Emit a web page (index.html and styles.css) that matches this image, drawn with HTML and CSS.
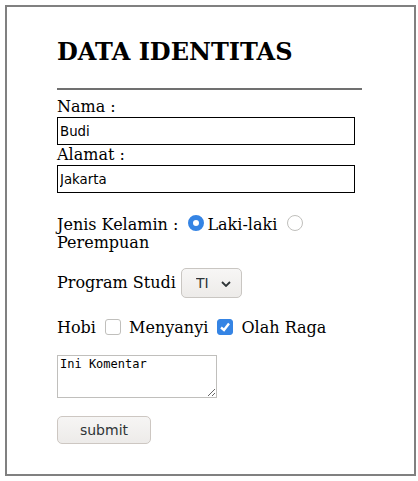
FILE: index.html
```html
<!DOCTYPE html>
<html>
<head>
<meta charset="utf-8">
<link rel="stylesheet" href="styles.css">
</head>
<body>
<div class="box">
  <h2 class="title">DATA IDENTITAS</h2>
  <hr class="rule">
  <form class="form">
    <label class="lbl">Nama :</label>
    <input class="txt" type="text" value="Budi">
    <label class="lbl">Alamat :</label>
    <input class="txt" type="text" value="Jakarta">
    <p class="row gender">Jenis Kelamin : <input class="radio" type="radio" name="jk" checked>Laki-laki <input class="radio" type="radio" name="jk">Perempuan</p>
    <p class="row prodi">Program Studi <select class="sel"><option>TI</option></select></p>
    <p class="row hobi">Hobi <input class="check" type="checkbox"> Menyanyi <input class="check" type="checkbox" checked> Olah Raga</p>
    <textarea class="area" spellcheck="false">Ini Komentar</textarea>
    <button class="btn" type="button">submit</button>
  </form>
</div>
</body>
</html>
```
FILE: styles.css
```css
html, body { margin: 0; padding: 0; background: #fff; }
body { font-family: "DejaVu Serif", serif; font-size: 16px; color: #000; }
.box {
  box-sizing: border-box;
  margin: 5px;
  width: 411px;
  height: 471px;
  border: 2px solid #808080;
  padding: 31px 50px 0 50px;
}
.title {
  margin: 0;
  font-size: 24px;
  line-height: 28px;
  font-weight: bold;
}
.rule {
  width: 305px;
  margin: 22px 0 7px 0;
  border: 0;
  height: 2px;
  background: #707070;
}
.form { margin: 0; }
.lbl { display: block; line-height: 20px; }
.txt {
  display: block;
  box-sizing: border-box;
  width: 298px;
  height: 28px;
  margin: 0;
  border: 1px solid #000;
  padding: 0 2px;
  font-family: "DejaVu Sans", sans-serif;
  font-size: 13.33px;
  color: #000;
  background: #fff;
  outline: none;
}
.row { margin: 16px 0; line-height: 18px; }
.gender { margin-top: 22px; }
.prodi { margin-top: 16px; }
.hobi { margin-top: 21px; margin-bottom: 18px; }
.radio {
  appearance: none;
  -webkit-appearance: none;
  width: 16px; height: 16px;
  margin: 0 3px 0 5px;
  border: 1px solid #c0bfbc;
  border-radius: 50%;
  background: #fff;
  box-sizing: border-box;
  vertical-align: -1px;
}
.radio:checked {
  border: 5px solid #3584e4;
  background: #fff;
}
.sel {
  appearance: none;
  -webkit-appearance: none;
  box-sizing: border-box;
  width: 61px; height: 30px;
  margin: 0;
  border: 1px solid #c9c6c2;
  border-radius: 5px;
  font-family: "DejaVu Sans", sans-serif;
  font-size: 14px;
  color: #2e3436;
  padding: 0 0 0 14px;
  background-image: url("data:image/svg+xml;utf8,<svg xmlns='http://www.w3.org/2000/svg' width='10' height='6'><path d='M1 1 L5 5 L9 1' fill='none' stroke='%232e3436' stroke-width='1.8'/></svg>"), linear-gradient(#f7f6f5, #edebe9);
  background-repeat: no-repeat, no-repeat;
  background-position: 39px 12px, 0 0;
  vertical-align: middle;
}
.check {
  appearance: none;
  -webkit-appearance: none;
  box-sizing: border-box;
  width: 16px; height: 16px;
  margin: 0 3px 0 4px;
  border: 1px solid #c0bfbc;
  border-radius: 3px;
  background: #fff;
  vertical-align: -2px;
}
.check:checked {
  border-color: #3584e4;
  background: #3584e4 url("data:image/svg+xml;utf8,<svg xmlns='http://www.w3.org/2000/svg' width='14' height='14'><path d='M3 7.5 L6 10 L11 3.5' fill='none' stroke='white' stroke-width='2.4'/></svg>") no-repeat center;
}
.area {
  display: block;
  box-sizing: border-box;
  width: 160px; height: 43px;
  margin: 0;
  border: 1px solid #c0bfbc;
  padding: 1px 2px;
  font-family: "DejaVu Sans Mono", monospace;
  font-size: 12px;
  line-height: 14px;
  color: #000;
  resize: both;
}
.btn {
  display: block;
  box-sizing: border-box;
  width: 94px; height: 28px;
  margin: 18px 0 0 0;
  border: 1px solid #cdc7c2;
  border-radius: 5px;
  background: linear-gradient(#f6f5f4, #edebe9);
  font-family: "DejaVu Sans", sans-serif;
  font-size: 14px;
  color: #2e3436;
  padding: 0;
}
```
